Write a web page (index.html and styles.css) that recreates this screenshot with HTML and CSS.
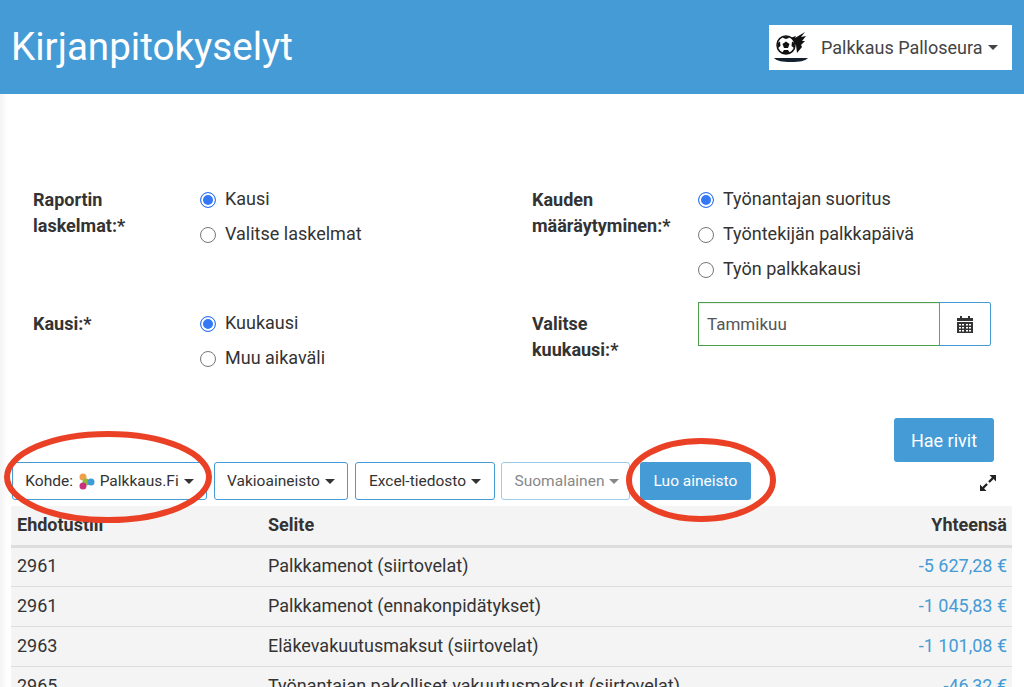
FILE: index.html
```html
<!DOCTYPE html>
<html lang="en">
<head>
    <meta charset="UTF-8">
    <meta name="viewport" content="width=device-width, initial-scale=1.0">
    <title>Kirjanpitokyselyt</title>
    <link rel="stylesheet" href="styles.css">
</head>
<body>

<header class="topbar">
    <h1>Kirjanpitokyselyt</h1>
    <div class="company">
        <svg class="company-logo" width="36" height="32" viewBox="0 0 36 32">
            <path d="M16 7 L22 5 L21 7 L31 1 L27 6 L32 5 L28 10 L31 10 L27 14 L28 16 L23 22 L22 14 L17 9 Z" fill="#111"/>
            <circle cx="12" cy="14" r="9" fill="#fff" stroke="#111" stroke-width="1.5"/>
            <path d="M12 10.500 L15.500 13 L14 17 L10 17 L8.500 13 Z" fill="#111"/>
            <path d="M8 6.500 L12 5.500 L16 6.500 L12 8 Z M3.500 12 L6 10.500 L6.500 15 L4 17 Z M20.500 12 L18 10.500 L17.500 15 L20 17 Z M8 22 L10 19 L14 19 L16 22 L12 23 Z" fill="#111"/>
            <path d="M0 27 H34 C31 30 26 31 17 31 C8 31 3 30 0 27 Z" fill="#15202e"/>
        </svg>
        <span>Palkkaus Palloseura</span>
        <span class="caret"></span>
    </div>
</header>

<main class="content">
    <section class="form-grid">
        <label class="field-label">Raportin<br>laskelmat:*</label>
        <div class="radios">
            <div class="radio-row"><span class="radio checked"></span>Kausi</div>
            <div class="radio-row"><span class="radio"></span>Valitse laskelmat</div>
        </div>
        <label class="field-label">Kauden<br>määräytyminen:*</label>
        <div class="radios">
            <div class="radio-row"><span class="radio checked"></span>Työnantajan suoritus</div>
            <div class="radio-row"><span class="radio"></span>Työntekijän palkkapäivä</div>
            <div class="radio-row"><span class="radio"></span>Työn palkkakausi</div>
        </div>

        <label class="field-label">Kausi:*</label>
        <div class="radios">
            <div class="radio-row"><span class="radio checked"></span>Kuukausi</div>
            <div class="radio-row"><span class="radio"></span>Muu aikaväli</div>
        </div>
        <label class="field-label">Valitse<br>kuukausi:*</label>
        <div class="date-input">
            <div class="date-value">Tammikuu</div>
            <div class="date-btn">
                <svg width="18" height="18" viewBox="0 0 18 18">
                    <path d="M1 3 H4 V1 H6 V3 H12 V1 H14 V3 H17 V6 H1 Z" fill="#333"/>
                    <path fill-rule="evenodd" fill="#333" d="M1 7 H17 V18 H1 Z M3 9 V10.500 H5 V9 Z M6 9 V10.500 H8 V9 Z M10 9 V10.500 H12 V9 Z M13 9 V10.500 H15 V9 Z M3 12 V13.500 H5 V12 Z M6 12 V13.500 H8 V12 Z M10 12 V13.500 H12 V12 Z M13 12 V13.500 H15 V12 Z M3 15 V16.500 H5 V15 Z M6 15 V16.500 H8 V15 Z M10 15 V16.500 H12 V15 Z M13 15 V16.500 H15 V15 Z"/>
                </svg>
            </div>
        </div>
    </section>

    <div class="search-row">
        <button class="btn-primary btn-search">Hae rivit</button>
    </div>

    <div class="toolbar">
        <button class="btn-outline btn-target">Kohde:
            <svg class="brand-dots" width="17" height="17" viewBox="0 0 17 17">
                <circle cx="5" cy="4" r="3.500" fill="#f0a04b"/>
                <circle cx="8" cy="9" r="3.500" fill="#8dbb3c"/>
                <circle cx="13" cy="9" r="3.500" fill="#3d9bd8"/>
                <circle cx="5" cy="13" r="3.500" fill="#c9317f"/>
            </svg>
            Palkkaus.Fi<span class="caret"></span></button>
        <button class="btn-outline btn-standard">Vakioaineisto<span class="caret"></span></button>
        <button class="btn-outline btn-excel">Excel-tiedosto<span class="caret"></span></button>
        <button class="btn-outline btn-lang">Suomalainen<span class="caret"></span></button>
        <button class="btn-primary btn-create">Luo aineisto</button>
        <svg class="expand-icon" width="18" height="18" viewBox="0 0 18 18">
            <path d="M10.500 1 H17 V7.500 L14.600 5.100 L5.100 14.600 L7.500 17 H1 V10.500 L3.400 12.900 L12.900 3.400 Z" fill="#222"/>
            <path d="M7.600 8.400 L9.600 10.400 M8.400 7.600 L10.400 9.600" stroke="#fff" stroke-width="1.500"/>
        </svg>
    </div>

    <table class="report">
        <thead>
            <tr><th>Ehdotustili</th><th>Selite</th><th class="sum">Yhteensä</th></tr>
        </thead>
        <tbody>
            <tr><td>2961</td><td>Palkkamenot (siirtovelat)</td><td class="sum">-5 627,28 €</td></tr>
            <tr><td>2961</td><td>Palkkamenot (ennakonpidätykset)</td><td class="sum">-1 045,83 €</td></tr>
            <tr><td>2963</td><td>Eläkevakuutusmaksut (siirtovelat)</td><td class="sum">-1 101,08 €</td></tr>
            <tr><td>2965</td><td>Työnantajan pakolliset vakuutusmaksut (siirtovelat)</td><td class="sum">-46,32 €</td></tr>
        </tbody>
    </table>
</main>

<!-- red hand drawn markings on top of the screenshot -->
<svg class="markup" width="1024" height="687" viewBox="0 0 1024 687">
    <ellipse cx="108" cy="477" rx="101" ry="43" fill="none" stroke="#ea4126" stroke-width="6"/>
    <ellipse cx="701" cy="480" rx="72" ry="39" fill="none" stroke="#ea4126" stroke-width="6"/>
</svg>

</body>
</html>
```

FILE: styles.css
```css
html, body {
    height: 100%;
    overflow: hidden;
}
body {
    position: relative;
    margin: 0;
    font-family: Roboto, Arial, sans-serif;
    font-size: 18px;
    color: #333;
    background-color: white;
}
.topbar {
    display: flex;
    align-items: center;
    justify-content: space-between;
    height: 94px;
    padding: 0 12px 0 11px;
    background-color: #459bd6;
    box-sizing: border-box;
}
.topbar h1 {
    margin: -2px 0 0;
    font-size: 38.6px;
    font-weight: 400;
    color: white;
}
.company {
    display: flex;
    align-items: center;
    width: 243px;
    height: 45px;
    box-sizing: border-box;
    padding-left: 5px;
    background-color: white;
    color: #444;
}
.company-logo {
    margin-right: 11px;
}
.caret {
    display: inline-block;
    margin-left: 5px;
    border-top: 5px solid currentColor;
    border-left: 5px solid transparent;
    border-right: 5px solid transparent;
    vertical-align: middle;
}
.content {
    padding: 0 12px 0 11px;
    box-shadow: inset 10px 0 8px -8px #eee;
}
.form-grid {
    display: grid;
    grid-template-columns: 167px 332px 166px 293px;
    row-gap: 19px;
    padding: 93px 0 0 22px;
}
.field-label {
    font-weight: 700;
    line-height: 26px;
}
.radios {
    display: flex;
    flex-direction: column;
}
.radio-row {
    display: flex;
    align-items: center;
    height: 35px;
    margin-top: -6px;
    margin-bottom: 6px;
}
.radio {
    width: 14px;
    height: 14px;
    margin-top: 2px;
    margin-right: 9px;
    border: 1px solid #767676;
    border-radius: 50%;
    background: white;
}
.radio.checked {
    border-color: #3478f6;
    box-shadow: inset 0 0 0 2px white;
    background: #3478f6;
}
.date-input {
    display: flex;
    height: 44px;
    box-sizing: border-box;
    margin-top: -9px;
}
.date-value {
    flex: 1;
    display: flex;
    align-items: center;
    padding-left: 8px;
    border: 1px solid #4aa04a;
    color: #555;
    font-size: 17px;
    box-shadow: inset 0 1px 1px #eee;
}
.date-btn {
    display: flex;
    align-items: center;
    justify-content: center;
    width: 50px;
    border: 1px solid #459bd6;
    border-radius: 0 2px 2px 0;
    margin-left: -1px;
}
.search-row {
    display: flex;
    justify-content: flex-end;
    padding-right: 18px;
    margin-top: 37px;
}
button {
    font-family: Roboto, Arial, sans-serif;
    border-radius: 3px;
    box-sizing: border-box;
    cursor: pointer;
}
.btn-primary {
    background-color: #459bd6;
    color: white;
    border: none;
}
.btn-search {
    width: 100px;
    height: 44px;
    font-size: 18px;
}
.toolbar {
    display: flex;
    align-items: center;
    height: 38px;
    margin-left: 1px;
}
.btn-outline {
    height: 38px;
    background: white;
    border: 1px solid #459bd6;
    color: #333;
    font-size: 15.5px;
    white-space: nowrap;
    padding: 0;
}
.btn-target { width: 195px; }
.btn-standard { width: 134px; margin-left: 7px; }
.btn-excel { width: 140px; margin-left: 7px; }
.btn-lang {
    width: 129px;
    margin-left: 6px;
    padding-left: 3px;
    border-color: #9fcbea;
    color: #888;
}
.btn-create {
    width: 111px;
    height: 38px;
    margin-left: 10px;
    font-size: 15.5px;
}
.brand-dots {
    vertical-align: -4px;
    margin: 0 1px;
}
.expand-icon {
    margin-left: auto;
    margin-right: 15px;
    margin-top: 4px;
}
.report {
    width: 1001px;
    margin-top: 6px;
    border-collapse: collapse;
    background-color: #f4f4f4;
}
.report th, .report td {
    height: 40px;
    padding: 0 5px 2px 6px;
    text-align: left;
    box-sizing: border-box;
}
.report th {
    font-weight: 700;
    border-bottom: 3px solid #ddd;
}
.report td {
    border-bottom: 1px solid #ddd;
}
.report th:first-child { width: 251px; }
.report .sum {
    text-align: right;
}
.report td.sum {
    color: #459bd6;
}
.markup {
    position: absolute;
    top: 0;
    left: 0;
    pointer-events: none;
}
```
